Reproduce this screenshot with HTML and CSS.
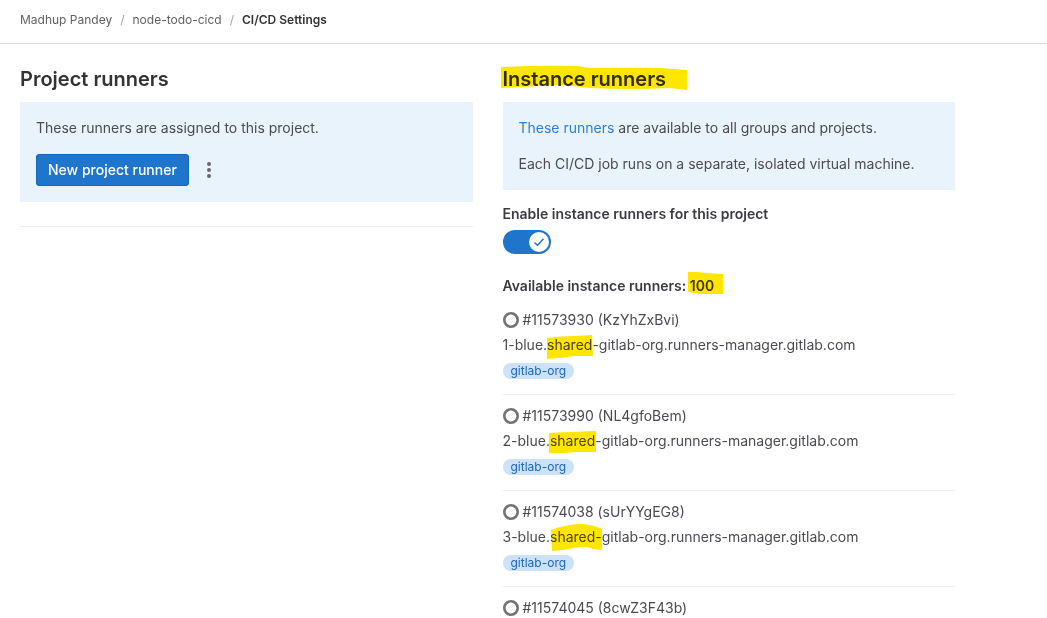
FILE: index.html
```html
<!DOCTYPE html>
<html lang="en">
<head>
<meta charset="utf-8">
<meta name="viewport" content="width=device-width, initial-scale=1">
<title>CI/CD Settings</title>
<link rel="stylesheet" href="styles.css">
</head>
<body>
<header class="top-bar">
  <nav aria-label="Breadcrumbs">
    <ol class="breadcrumbs">
      <li><a href="#">Madhup Pandey</a></li>
      <li><a href="#">node-todo-cicd</a></li>
      <li><a href="#" aria-current="page">CI/CD Settings</a></li>
    </ol>
  </nav>
</header>
<main class="columns">
  <section>
    <h2 class="title">Project runners</h2>
    <div class="panel">
      <p>These runners are assigned to this project.</p>
      <div class="actions">
        <button class="btn-confirm" type="button">New project runner</button>
        <button class="btn-more" type="button" aria-label="More actions">
          <svg width="16" height="16" viewBox="0 0 16 16" fill="currentColor"><circle cx="8" cy="2" r="2"/><circle cx="8" cy="8" r="2"/><circle cx="8" cy="14" r="2"/></svg>
        </button>
      </div>
    </div>
    <hr class="divider">
  </section>
  <section>
    <h2 class="title"><span class="marked">Instance runners<svg class="marker marker-title" viewBox="0 0 188 26"><path d="M1 2Q40 0 78 1Q86 3 94 3L160 3L187 5V25L170 23Q130 25 90 23Q75 21 60 20L20 22L1 23Z"/></svg></span></h2>
    <div class="panel">
      <p><a class="link" href="#">These runners</a> are available to all groups and projects.</p>
      <p>Each CI/CD job runs on a separate, isolated virtual machine.</p>
    </div>
    <div class="toggle-field">
      <label class="strong" for="enable-runners">Enable instance runners for this project</label>
      <span class="toggle">
        <input id="enable-runners" type="checkbox" role="switch" checked>
        <svg width="20" height="20" viewBox="0 0 20 20"><circle cx="10" cy="10" r="10" fill="#fff"/><path d="M5.5 10.5L8.5 13.2L14.5 6.8" fill="none" stroke="#1f75cb" stroke-width="1.5"/></svg>
      </span>
    </div>
    <h5 class="strong count">Available instance runners: <span class="marked">100<svg class="marker marker-count" viewBox="0 0 36 24"><path d="M1 1L10 1L20 2L36 3V23L14 23L1 21Z"/></svg></span></h5>
    <ul class="runners">
      <li>
        <div class="runner-id"><svg width="16" height="16" viewBox="0 0 16 16"><circle cx="8" cy="8" r="6.7"/></svg><span>#11573930 (KzYhZxBvi)</span></div>
        <div class="runner-name">1-blue.<span class="marked">shared<svg class="marker marker-word" viewBox="0 0 48 24"><path d="M1 3Q14 1 28 1L46 0L47 21L28 21L14 23L1 24Z"/></svg></span>-gitlab-org.runners-manager.gitlab.com</div>
        <span class="badge">gitlab-org</span>
      </li>
      <li>
        <div class="runner-id"><svg width="16" height="16" viewBox="0 0 16 16"><circle cx="8" cy="8" r="6.7"/></svg><span>#11573990 (NL4gfoBem)</span></div>
        <div class="runner-name">2-blue.<span class="marked">shared<svg class="marker marker-word" viewBox="0 0 48 24"><path d="M0 2L20 1L47 0V21L28 21L14 22L0 22Z"/></svg></span>-gitlab-org.runners-manager.gitlab.com</div>
        <span class="badge">gitlab-org</span>
      </li>
      <li>
        <div class="runner-id"><svg width="16" height="16" viewBox="0 0 16 16"><circle cx="8" cy="8" r="6.7"/></svg><span>#11574038 (sUrYYgEG8)</span></div>
        <div class="runner-name">3-blue.<span class="marked">shared-<svg class="marker marker-long" viewBox="0 0 52 28"><path d="M0 6Q13 1 28 0Q40 0 51 5V26L42 25Q36 22 28 23L12 26L1 27Z"/></svg></span>gitlab-org.runners-manager.gitlab.com</div>
        <span class="badge">gitlab-org</span>
      </li>
      <li>
        <div class="runner-id"><svg width="16" height="16" viewBox="0 0 16 16"><circle cx="8" cy="8" r="6.7"/></svg><span>#11574045 (8cwZ3F43b)</span></div>
      </li>
    </ul>
  </section>
</main>
</body>
</html>
```

FILE: styles.css
```css
* {
  box-sizing: border-box;
}

body {
  margin: 0;
  background: #fff;
  color: #4c4a52;
  font: 14px/20px Inter, "Noto Sans", sans-serif;
}

h2, h5, p, ol, ul {
  margin: 0;
  padding: 0;
}

ol, ul {
  list-style: none;
}

a {
  text-decoration: none;
}

.top-bar {
  padding: 10px 20px 13px;
  border-bottom: 1px solid #dcdcde;
}

.breadcrumbs {
  display: flex;
  font-size: 12px;
}

.breadcrumbs a {
  color: #626168;
}

.breadcrumbs li + li::before {
  content: "/";
  padding: 0 8px;
  color: #a4a3a8;
}

.breadcrumbs a[aria-current] {
  color: #333238;
  font-weight: 600;
}

.columns {
  display: grid;
  grid-template-columns: 1fr 1fr;
  gap: 30px;
  padding: 23px 92px 0 20px;
}

.title {
  margin-bottom: 11px;
  color: #333238;
  font-size: 20px;
  line-height: 24px;
  font-weight: 600;
}

.panel {
  display: grid;
  gap: 16px;
  padding: 16px;
  background: #e9f3fc;
}

.actions {
  display: flex;
  gap: 4px;
}

.btn-confirm {
  height: 32px;
  padding: 0 12px;
  border: 0;
  border-radius: 4px;
  background: #1f75cb;
  box-shadow: inset 0 0 0 1px #1068bf;
  color: #fff;
  font: inherit;
  font-weight: 500;
}

.btn-more {
  display: grid;
  place-items: center;
  width: 32px;
  height: 32px;
  padding: 0;
  border: 0;
  background: none;
  color: #68666f;
}

.divider {
  margin: 24px 0 0;
  border: 0;
  border-top: 1px solid #ececef;
}

.link {
  color: #2f7fd3;
}

.strong {
  color: #3d3b42;
  font-size: 14px;
  font-weight: 600;
}

.toggle-field {
  display: grid;
  justify-items: start;
  gap: 6px;
  margin: 14px 0 22px;
}

.toggle {
  display: grid;
  align-items: center;
  justify-items: end;
}

.toggle > * {
  grid-area: 1 / 1;
}

.toggle input {
  appearance: none;
  width: 48px;
  height: 24px;
  margin: 0;
  border-radius: 12px;
  background: #1f75cb;
}

.toggle svg {
  margin-right: 2px;
  pointer-events: none;
}

.count {
  margin-bottom: 3px;
}

.runners li {
  padding: 11px 0 15px;
  border-bottom: 1px solid #ececef;
}

.runners li:last-child {
  padding-bottom: 0;
  border-bottom: 0;
}

.runner-id {
  display: flex;
  align-items: center;
  gap: 4px;
  margin-bottom: 5px;
}

.runners li:last-child .runner-id {
  margin-bottom: 0;
}

.runner-id svg {
  fill: none;
  stroke: #737278;
  stroke-width: 2.6;
}

.badge {
  display: block;
  width: fit-content;
  margin-top: 8px;
  padding: 0 8px;
  border-radius: 8px;
  background: #cbe2f9;
  color: #2068b5;
  font-size: 12px;
  line-height: 16px;
}

/* Highlighter strokes tint the text they cover. */
.marked {
  position: relative;
}

.marker {
  position: absolute;
  fill: #ffe600;
  mix-blend-mode: multiply;
  pointer-events: none;
}

.marker-title {
  top: -2px;
  left: -3px;
  width: 188px;
  height: 26px;
}

.marker-count {
  top: -6px;
  left: -3px;
  width: 36px;
  height: 24px;
}

.marker-word {
  top: -1px;
  left: -1px;
  width: 48px;
  height: 24px;
}

.marker-long {
  top: -4px;
  left: 1px;
  width: 52px;
  height: 28px;
}
```
